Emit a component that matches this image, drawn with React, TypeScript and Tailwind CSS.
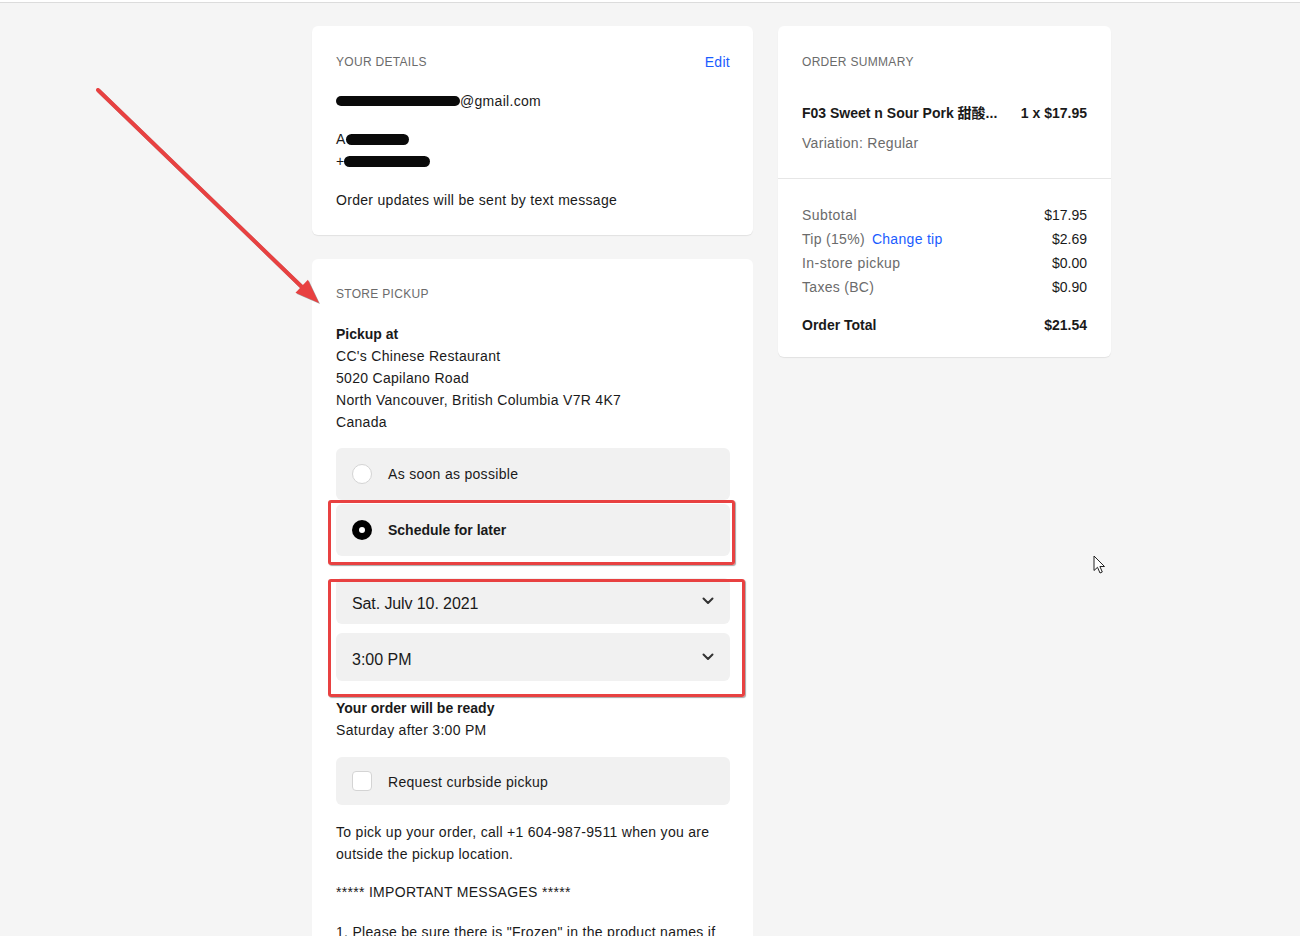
import React from "react";

const Redact = ({ w, h = 9 }: { w: number; h?: number }) => (
  <span
    className="inline-block bg-[#0a0a0a] rounded-full align-middle"
    style={{ width: w, height: h }}
  />
);

const Chevron = () => (
  <svg width="12" height="8" viewBox="0 0 12 8" className="text-[#333]">
    <path d="M1.5 1.5 L6 6 L10.5 1.5" fill="none" stroke="currentColor" strokeWidth="2" strokeLinecap="round" strokeLinejoin="round" />
  </svg>
);

export default function App() {
  return (
    <div
      className="relative min-h-[936px] h-[936px] overflow-hidden bg-[#f5f5f5] text-[#1a1a1a] text-[14px] tracking-[0.3px]"
      style={{ fontFamily: '"Liberation Sans", Arial, "Noto Sans CJK SC", sans-serif' }}
    >
      <div className="h-[3px] bg-white border-b border-[#dcdcdc]" />
      <div className="flex items-start gap-[25px] pl-[312px] pt-[23px]">
        {/* Left column */}
        <div className="w-[441px] flex flex-col gap-[24px]">
          {/* Your details */}
          <div className="bg-white rounded-[6px] shadow-[0_1px_1px_rgba(0,0,0,0.08)] px-[24px] pt-[25px] pb-[24px]">
            <div className="flex justify-between items-center h-[22px]">
              <span className="text-[12px] tracking-[0.3px] text-[#6b6b6b]">YOUR DETAILS</span>
              <span className="text-[#1a5cff] text-[14px] mr-[-1px]">Edit</span>
            </div>
            <div className="mt-[17px] leading-[22px] flex items-center">
              <Redact w={124} h={10} />
              <span>@gmail.com</span>
            </div>
            <div className="mt-[16px] leading-[22px] flex items-center">
              <span>A</span>
              <Redact w={63} h={11} />
            </div>
            <div className="leading-[22px] flex items-center">
              <span>+</span>
              <Redact w={86} h={11} />
            </div>
            <div className="mt-[17px] leading-[22px]">Order updates will be sent by text message</div>
          </div>

          {/* Store pickup */}
          <div className="bg-white rounded-t-[6px] px-[24px] pt-[24px] pb-[40px]">
            <div className="h-[22px] flex items-center text-[12px] tracking-[0.3px] text-[#6b6b6b]">STORE PICKUP</div>
            <div className="mt-[18px] leading-[22px]">
              <div className="font-bold tracking-normal">Pickup at</div>
              <div>CC's Chinese Restaurant</div>
              <div>5020 Capilano Road</div>
              <div>North Vancouver, British Columbia V7R 4K7</div>
              <div>Canada</div>
            </div>

            <div className="mt-[15px] flex flex-col gap-[4px] mr-[-1px]">
              <div className="h-[52px] bg-[#f1f1f1] rounded-[6px] flex items-center pl-[16px]">
                <span className="w-[20px] h-[20px] rounded-full bg-white border border-[#d4d4d4]" />
                <span className="ml-[16px]">As soon as possible</span>
              </div>
              <div className="h-[52px] bg-[#f1f1f1] rounded-[6px] flex items-center pl-[16px]">
                <span className="w-[20px] h-[20px] rounded-full bg-black flex items-center justify-center">
                  <span className="w-[6px] h-[6px] rounded-full bg-white" />
                </span>
                <span className="ml-[16px] font-bold tracking-normal">Schedule for later</span>
              </div>
            </div>

            <div className="mt-[22px] flex flex-col gap-[9px] mr-[-1px]">
              <div className="h-[46px] bg-[#f1f1f1] rounded-[6px] flex items-center justify-between pl-[16px] pr-[16px] text-[16px] tracking-[-0.1px]">
                <span className="translate-y-[3px]">Sat. Julv 10. 2021</span>
                <Chevron />
              </div>
              <div className="h-[48px] bg-[#f1f1f1] rounded-[6px] flex items-center justify-between pl-[16px] pr-[16px] text-[16px] tracking-normal">
                <span className="translate-y-[3px]">3:00 PM</span>
                <Chevron />
              </div>
            </div>

            <div className="mt-[16px] leading-[22px]">
              <div className="font-bold tracking-normal">Your order will be ready</div>
              <div>Saturday after 3:00 PM</div>
            </div>

            <div className="mt-[16px] h-[48px] bg-[#f1f1f1] rounded-[6px] flex items-center pl-[16px] mr-[-1px]">
              <span className="w-[20px] h-[20px] rounded-[4px] bg-white border border-[#d4d4d4]" />
              <span className="ml-[16px] translate-y-[1px]">Request curbside pickup</span>
            </div>

            <div className="mt-[16px] leading-[22px]">
              To pick up your order, call +1 604-987-9511 when you are outside the pickup location.
            </div>
            <div className="mt-[16px] leading-[22px]">***** IMPORTANT MESSAGES *****</div>
            <div className="mt-[18px] leading-[22px]">1. Please be sure there is "Frozen" in the product names if</div>
          </div>
        </div>

        {/* Right column */}
        <div className="w-[333px] bg-white rounded-[6px] shadow-[0_1px_1px_rgba(0,0,0,0.08)]">
          <div className="px-[24px] pt-[25px] pb-[24px]">
            <div className="h-[22px] flex items-center text-[12px] tracking-[0.3px] text-[#6b6b6b]">ORDER SUMMARY</div>
            <div className="mt-[29px] flex justify-between items-center leading-[22px] font-bold tracking-normal">
              <span>F03 Sweet n Sour Pork 甜酸...</span>
              <span>1 x $17.95</span>
            </div>
            <div className="mt-[8px] leading-[22px] text-[#6b6b6b]">Variation: Regular</div>
          </div>
          <div className="border-t border-[#e6e6e6] px-[24px] pt-[24px] pb-[20px]">
            <div className="leading-[24px]">
              <div className="flex justify-between">
                <span className="text-[#6b6b6b] tracking-[0.45px]">Subtotal</span>
                <span className="tracking-normal">$17.95</span>
              </div>
              <div className="flex justify-between">
                <span className="text-[#6b6b6b]">
                  Tip (15%)<span className="ml-[7px] text-[#1a5cff]">Change tip</span>
                </span>
                <span className="tracking-normal">$2.69</span>
              </div>
              <div className="flex justify-between">
                <span className="text-[#6b6b6b] tracking-[0.45px]">In-store pickup</span>
                <span className="tracking-normal">$0.00</span>
              </div>
              <div className="flex justify-between">
                <span className="text-[#6b6b6b]">Taxes (BC)</span>
                <span className="tracking-normal">$0.90</span>
              </div>
            </div>
            <div className="mt-[14px] flex justify-between leading-[24px] font-bold tracking-normal">
              <span>Order Total</span>
              <span>$21.54</span>
            </div>
          </div>
        </div>
      </div>

      {/* Annotations */}
      <div className="absolute left-[328px] top-[500px] w-[407px] h-[65px] border-[3px] border-[#e84141] rounded-[3px] shadow-[1px_1px_1px_rgba(0,0,0,0.35)]" />
      <div className="absolute left-[328px] top-[579px] w-[417px] h-[118px] border-[3px] border-[#e84141] rounded-[3px] shadow-[1px_1px_1px_rgba(0,0,0,0.35)]" />
      <svg className="absolute left-0 top-0 pointer-events-none" width="1300" height="936">
        <g style={{ filter: "drop-shadow(1px 1px 0.5px rgba(0,0,0,0.35))" }}>
          <line x1="98" y1="90" x2="304" y2="289" stroke="#e84141" strokeWidth="4" strokeLinecap="round" />
          <polygon points="319,303 295.5,292.8 307.9,279.8" fill="#e84141" />
        </g>
      </svg>
      {/* cursor */}
      <svg className="absolute left-[1093px] top-[555px]" width="14" height="20" viewBox="0 0 14 20">
        <path d="M1 1 L1 15.5 L4.5 12.3 L7 18 L9.3 17 L6.9 11.5 L11.5 11.5 Z" fill="white" stroke="#222" strokeWidth="1" strokeLinejoin="round" />
      </svg>
    </div>
  );
}
